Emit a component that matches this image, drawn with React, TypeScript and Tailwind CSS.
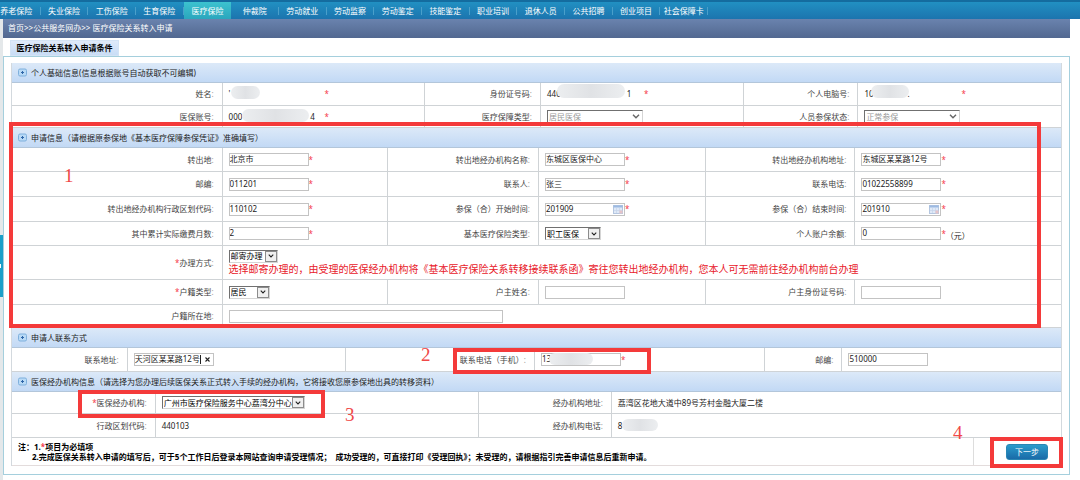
import { ReactNode } from 'react';
import { clsx } from 'clsx';

const NAV = [
  '养老保险', '失业保险', '工伤保险', '生育保险', '医疗保险', '仲裁院', '劳动就业', '劳动监察',
  '劳动鉴定', '技能鉴定', '职业培训', '退休人员', '公共招聘', '创业项目', '社会保障卡',
];

function PlusIcon() {
  return (
    <svg className="size-[9px] shrink-0" viewBox="0 0 9 9" aria-hidden="true">
      <rect x="0.5" y="1" width="8" height="7" rx="1.5" fill="#b9daf6" stroke="#7fb0dd" />
      <path d="M4.5 3v3M3 4.5h3" stroke="#2f66a8" strokeWidth="1" />
    </svg>
  );
}

function SectionHeader({ children }: { children: ReactNode }) {
  return (
    <h2 className="flex h-5 items-center gap-1 border-b border-[#b3c6da] bg-linear-to-b from-[#dce9f8] to-[#c2d9f5] pl-[6px] text-[#222]">
      <PlusIcon />
      {children}
    </h2>
  );
}

function Star() {
  return <span className="text-[#f5384a]">*</span>;
}

type FieldProps = {
  label: string;
  id?: string;
  marked?: boolean;
  first?: boolean;
  valueClass?: string;
  children: ReactNode;
};

function Field({ label, id, marked, first, valueClass, children }: FieldProps) {
  const text = (
    <>
      {marked && <Star />}
      {label}
      <span className="text-[#999]">:</span>
    </>
  );
  return (
    <>
      <div
        className={clsx(
          'flex min-w-0 items-center justify-end pr-2 text-right whitespace-nowrap text-[#444]',
          !first && 'border-l border-[#cfd3d6]',
        )}
      >
        {id ? <label htmlFor={id}>{text}</label> : <span>{text}</span>}
      </div>
      <div className={clsx('flex min-w-0 items-center border-l border-[#cfd3d6] pl-[6px] whitespace-nowrap', valueClass)}>
        {children}
      </div>
    </>
  );
}

function TextBox({ id, value, wide, star, children }: { id: string; value?: string; wide?: boolean; star?: boolean; children?: ReactNode }) {
  return (
    <>
      <span className={clsx('relative flex shrink-0', wide ? 'w-[274px]' : 'w-20')}>
        <input
          id={id}
          defaultValue={value}
          className="h-[13px] w-full rounded-none border border-[#c3c3c3] bg-white pb-[2px] text-[8px] leading-[9px] text-[#222] outline-none"
        />
        {children}
      </span>
      {star && <Star />}
    </>
  );
}

function CalendarIcon() {
  return (
    <svg className="absolute top-[2px] right-[2px] h-[9px] w-[10px]" viewBox="0 0 10 9" aria-hidden="true">
      <rect x="0.5" y="0.5" width="9" height="8" fill="#dfe9f7" stroke="#b4c6e0" />
      <path d="M0.5 1.5h9" stroke="#9dbae2" strokeWidth="2" />
      <path d="M3.5 3v5M6.5 3v5M1 5.5h8" stroke="#c6d4e9" strokeWidth="0.7" />
      <rect x="6.5" y="5.5" width="3" height="3" fill="#e6c3c8" />
    </svg>
  );
}

function Picker({ id, value, widthClass, disabled }: { id: string; value: string; widthClass: string; disabled?: boolean }) {
  return (
    <span className={clsx('relative flex shrink-0', widthClass)}>
      <select
        id={id}
        disabled={disabled}
        className="h-[13px] w-full appearance-none rounded-none border border-[#d5d5d5] border-t-[#707070] border-l-[#707070] bg-white pl-px text-[8px] leading-[10px] text-black outline-none disabled:text-[#999] disabled:opacity-100"
      >
        <option>{value}</option>
      </select>
      <span
        className={clsx(
          'pointer-events-none absolute top-px right-px flex h-[11px] w-3 items-center justify-center',
          !disabled && 'border border-[#8c8c8c] bg-[#f0f0f0]',
        )}
      >
        <svg className={disabled ? 'h-[5px] w-2' : 'h-1 w-[6px]'} viewBox="0 0 8 5" aria-hidden="true">
          <path d="M1 0.8l3 3 3-3" fill="none" stroke={disabled ? '#666' : '#222'} strokeWidth="1.4" />
        </svg>
      </span>
    </span>
  );
}

function Mask({ className }: { className: string }) {
  return <span className={clsx('absolute rounded-full bg-linear-to-r from-[#eceef0] via-[#e0e2e5] to-[#eceef0]', className)} />;
}

function Callout({ className }: { className: string }) {
  return <div className={clsx('pointer-events-none absolute z-10 border-4 border-[#f43a3a]', className)} />;
}

function Step({ className, children }: { className: string; children: ReactNode }) {
  return (
    <span
      className={clsx(
        "pointer-events-none absolute z-10 font-['Liberation_Serif','Noto_Sans_CJK_SC',serif] text-[19px] leading-5 text-[#f04848]",
        className,
      )}
    >
      {children}
    </span>
  );
}

const ROW = 'grid border-b border-[#cfd3d6]';
const COLS_A = 'grid-cols-[210fr_203fr_116fr_203fr_115fr_204fr]';
const COLS_B = 'grid-cols-[210fr_166fr_151fr_167fr_150fr_207fr]';
const COLS_C = 'grid-cols-[115fr_219fr_189fr_230fr_78fr_220fr]';
const COLS_D = 'grid-cols-[143fr_324fr_133fr_451fr]';

export default function App() {
  return (
    <div className="relative flex min-h-screen flex-col overflow-hidden bg-white font-['Noto_Sans','Noto_Sans_CJK_SC',sans-serif] text-[8px] leading-[10px] text-[#222]">
      <nav className="h-[19px] border-t-2 border-[#146c9f] bg-linear-to-b from-[#2190c2] to-[#1c74ae]">
        <ul className="-ml-[7px] flex h-full max-w-[715px]">
          {NAV.map((item) => (
            <li
              key={item}
              className={clsx(
                'flex flex-1 items-center',
                item === '医疗保险' && 'bg-linear-to-b from-[#3cc3cf] to-[#2ba6bd]',
              )}
            >
              <a href="#" className="flex flex-1 items-center justify-center whitespace-nowrap text-white">
                {item}
              </a>
              {item !== '医疗保险' && <span className="h-2 w-px bg-[#4a9fca]" />}
            </li>
          ))}
        </ul>
      </nav>

      <div className="flex flex-1 flex-col border-l-[3px] border-[#e4e8ea] pr-[10px]">
        <div className="flex h-[19px] items-center bg-linear-to-b from-[#6a83ae] to-[#526890] pb-px pl-[5px] text-white">
          <a href="#">首页</a>&gt;&gt;<a href="#">公共服务网办</a>&gt;&gt;&nbsp;<a href="#">医疗保险关系转入申请</a>
        </div>

        <div className="flex h-[18px] pt-[2px] pl-[7px]">
          <h1 className="flex h-4 w-[109px] items-center justify-center border border-[#d3e3f5] bg-linear-to-b from-[#dfeafa] to-[#c9ddf6] font-bold text-black">
            医疗保险关系转入申请条件
          </h1>
        </div>

        <main className="border-x border-y border-[#a5cfdd] px-[7px] pt-[6px] pb-2">
          <form className="border-x border-[#d3d9de]" onSubmit={(e) => e.preventDefault()}>
            <section>
              <SectionHeader>个人基础信息(信息根据账号自动获取不可编辑)</SectionHeader>
              <div className={clsx(ROW, COLS_A, 'h-[23px]')}>
                <Field label="姓名" first valueClass="relative">
                  <span className="w-24">'</span>
                  <Mask className="top-[3px] left-2 h-[13px] w-[29px]" />
                  <Star />
                </Field>
                <Field label="身份证号码" valueClass="relative">
                  <span className="flex w-[97px] gap-[66px]"><span>440</span><span>1</span></span>
                  <Mask className="top-px left-4 h-[14px] w-[68px]" />
                  <Star />
                </Field>
                <Field label="个人电脑号" valueClass="relative">
                  <span className="flex w-[97px] gap-[34px]"><span>10</span><span>.</span></span>
                  <Mask className="top-[2px] left-[13px] h-[13px] w-[38px]" />
                  <Star />
                </Field>
              </div>
              <div className={clsx(ROW, COLS_A, 'h-[22px]')}>
                <Field label="医保账号" first valueClass="relative">
                  <span className="flex w-24 gap-[68px]"><span>000</span><span>4</span></span>
                  <Mask className="top-[3px] left-[19px] h-[13px] w-[67px]" />
                  <Star />
                </Field>
                <Field label="医疗保障类型" id="coverage">
                  <Picker id="coverage" value="居民医保" widthClass="w-24" disabled />
                </Field>
                <Field label="人员参保状态" id="status">
                  <Picker id="status" value="正常参保" widthClass="w-24" disabled />
                </Field>
              </div>
            </section>

            <section className="relative">
              <SectionHeader>申请信息（请根据原参保地《基本医疗保障参保凭证》准确填写）</SectionHeader>
              <div className={clsx(ROW, COLS_B, 'h-6')}>
                <Field label="转出地" id="from" first><TextBox id="from" value="北京市" star /></Field>
                <Field label="转出地经办机构名称" id="agency"><TextBox id="agency" value="东城区医保中心" star /></Field>
                <Field label="转出地经办机构地址" id="agencyAddress"><TextBox id="agencyAddress" value="东城区某某路12号" star /></Field>
              </div>
              <div className={clsx(ROW, COLS_B, 'h-[25px]')}>
                <Field label="邮编" id="zip" first><TextBox id="zip" value="011201" star /></Field>
                <Field label="联系人" id="contact"><TextBox id="contact" value="张三" star /></Field>
                <Field label="联系电话" id="phone"><TextBox id="phone" value="01022558899" star /></Field>
              </div>
              <div className={clsx(ROW, COLS_B, 'h-[25px]')}>
                <Field label="转出地经办机构行政区划代码" id="region" first><TextBox id="region" value="110102" star /></Field>
                <Field label="参保（合）开始时间" id="start"><TextBox id="start" value="201909" star><CalendarIcon /></TextBox></Field>
                <Field label="参保（合）结束时间" id="end"><TextBox id="end" value="201910" star><CalendarIcon /></TextBox></Field>
              </div>
              <div className={clsx(ROW, COLS_B, 'h-6')}>
                <Field label="其中累计实际缴费月数" id="months" first><TextBox id="months" value="2" star /></Field>
                <Field label="基本医疗保险类型" id="kind"><Picker id="kind" value="职工医保" widthClass="w-14" /></Field>
                <Field label="个人账户余额" id="balance">
                  <TextBox id="balance" value="0" star />
                  <span className="pt-1">（元）</span>
                </Field>
              </div>
              <div className={clsx(ROW, COLS_B, 'h-[34px]')}>
                <Field label="办理方式" id="method" marked first valueClass="col-span-5 flex-col items-start! justify-center">
                  <Picker id="method" value="邮寄办理" widthClass="w-[49px]" />
                  <p className="text-[10px] leading-[13px] text-[#e8202a]">
                    选择邮寄办理的，由受理的医保经办机构将《基本医疗保险关系转移接续联系函》寄往您转出地经办机构，您本人可无需前往经办机构前台办理
                  </p>
                </Field>
              </div>
              <div className={clsx(ROW, COLS_B, 'h-[25px]')}>
                <Field label="户籍类型" id="household" marked first><Picker id="household" value="居民" widthClass="w-[41px]" /></Field>
                <Field label="户主姓名" id="head"><TextBox id="head" /></Field>
                <Field label="户主身份证号码" id="headId"><TextBox id="headId" /></Field>
              </div>
              <div className={clsx(ROW, COLS_B, 'h-[23px]')}>
                <Field label="户籍所在地" id="place" first valueClass="col-span-5"><TextBox id="place" wide /></Field>
              </div>
              <Callout className="-top-[6px] right-5 bottom-0 -left-[3px]" />
              <Step className="top-[38px] left-[52px]">1</Step>
            </section>

            <section className="relative">
              <SectionHeader>申请人联系方式</SectionHeader>
              <div className={clsx(ROW, COLS_C, 'h-6')}>
                <Field label="联系地址" id="address" first>
                  <TextBox id="address" value="天河区某某路12号">
                    <button type="button" aria-label="清除" className="absolute top-0 right-0 flex h-[13px] w-3 items-center justify-center">
                      <svg className="size-[5px]" viewBox="0 0 5 5" aria-hidden="true">
                        <path d="M0.5 0.5l4 4M4.5 0.5l-4 4" stroke="#222" strokeWidth="1.1" />
                      </svg>
                    </button>
                    <span className="absolute top-[2px] right-[13px] h-[9px] w-px bg-[#222]" />
                  </TextBox>
                </Field>
                <Field label="联系电话（手机）" id="mobile">
                  <TextBox id="mobile" value="13" star>
                    <Mask className="top-0 left-2 h-3 w-[44px]" />
                  </TextBox>
                </Field>
                <Field label="邮编" id="zip2"><TextBox id="zip2" value="510000" /></Field>
              </div>
              <Callout className="top-5 left-[42%] h-[26px] w-[198px]" />
              <Step className="top-[17px] left-[39%]">2</Step>
            </section>

            <section className="relative">
              <SectionHeader>医保经办机构信息（请选择为您办理后续医保关系正式转入手续的经办机构，它将接收您原参保地出具的转移资料）</SectionHeader>
              <div className={clsx(ROW, COLS_D, 'h-[22px]')}>
                <Field label="医保经办机构" id="office" marked first>
                  <Picker id="office" value="广州市医疗保险服务中心荔湾分中心" widthClass="w-[143px]" />
                </Field>
                <Field label="经办机构地址">荔湾区花地大道中89号芳村金融大厦二楼</Field>
              </div>
              <div className={clsx(ROW, COLS_D, 'h-6')}>
                <Field label="行政区划代码" first>440103</Field>
                <Field label="经办机构电话" valueClass="relative">
                  8
                  <Mask className="top-[5px] left-[10px] h-3 w-9" />
                </Field>
              </div>
              <Callout className="top-[18px] left-[66px] h-[28px] w-[247px]" />
              <Step className="top-[33px] left-[333px]">3</Step>
            </section>

            <footer className="relative flex h-7 border-b border-[#e3dcdc]">
              <div className="flex flex-1 flex-col justify-center pl-[6px] font-bold whitespace-nowrap text-black">
                <p>注：1.<Star />项目为必填项</p>
                <p className="pl-[14px]">
                  2.完成医保关系转入申请的填写后，可于5个工作日后登录本网站查询申请受理情况；&nbsp; 成功受理的，可直接打印《受理回执》；未受理的，请根据指引完善申请信息后重新申请。
                </p>
              </div>
              <div className="relative flex w-[88px] justify-end border-l border-[#ddd] pt-[6px] pr-[13px]">
                <button
                  type="submit"
                  className="h-4 w-[42px] rounded-[3px] border border-[#2a86b4] bg-linear-to-b from-[#2b9ccb] to-[#1a6ba8] text-white"
                >
                  下一步
                </button>
                <Callout className="-top-px -right-[2px] h-[31px] w-[73px]" />
                <Step className="-top-[15px] -left-[21px]">4</Step>
              </div>
            </footer>
          </form>
        </main>
      </div>
      <div className="absolute top-[235px] left-0 flex h-[62px] w-[3px] items-center bg-[#1b9fc9]">
        <span className="h-1 w-px bg-white" />
      </div>
    </div>
  );
}
